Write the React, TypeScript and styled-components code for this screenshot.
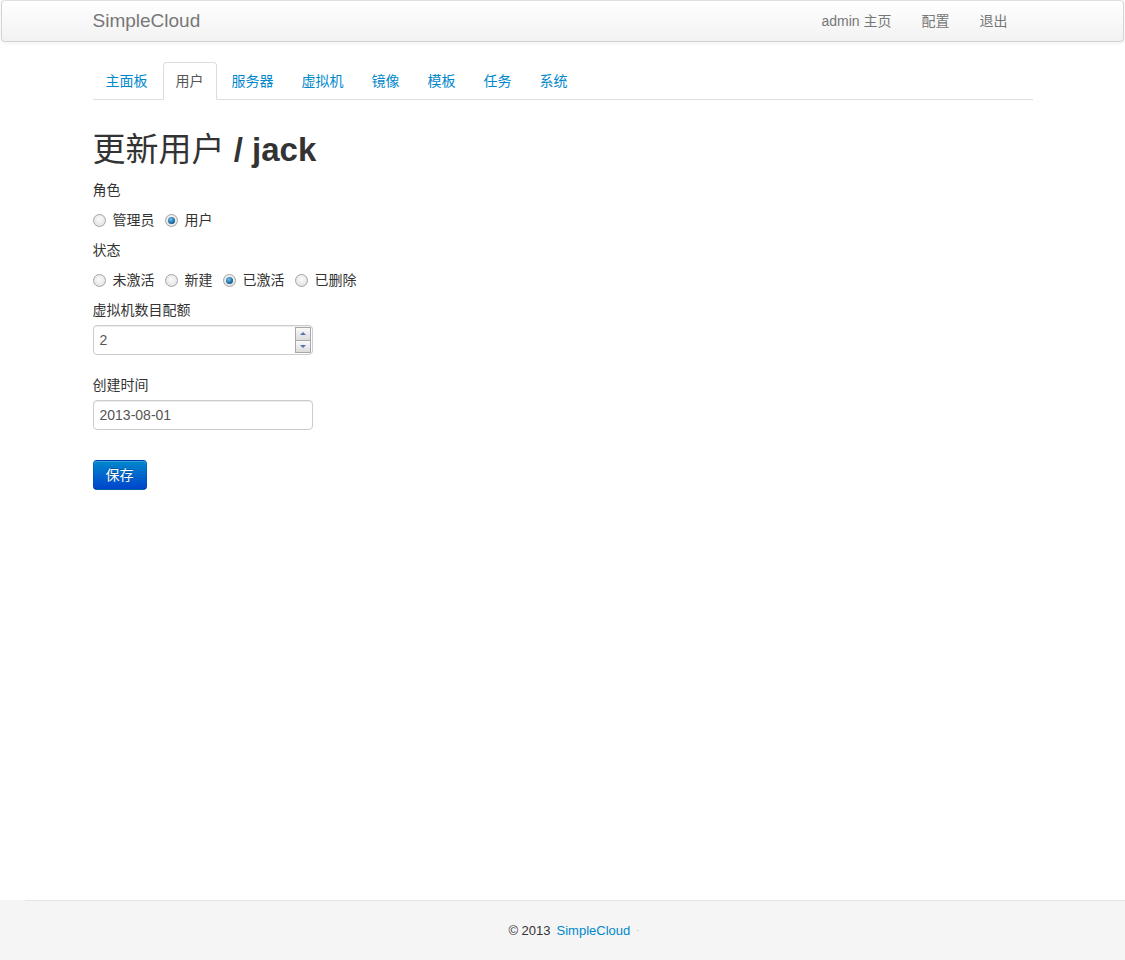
import React from "react";
import styled, { createGlobalStyle } from "styled-components";

const Global = createGlobalStyle`
  html, body { margin: 0; padding: 0; }
  body {
    font-family: "Liberation Sans", Arial, "Noto Sans CJK SC", sans-serif;
    font-size: 14px;
    line-height: 20px;
    color: #333;
    background: #fff;
  }
  * { box-sizing: border-box; }
`;

const Page = styled.div`
  min-height: 100vh;
  display: flex;
  flex-direction: column;
`;

const Navbar = styled.div`
  margin: 0 1px;
  height: 42px;
  border: 1px solid #d4d4d4;
  border-top-color: #e0e0e0;
  border-radius: 4px;
  background: linear-gradient(to bottom, #ffffff, #f2f2f2);
  box-shadow: 0 1px 4px rgba(0, 0, 0, 0.065);
`;

const Container = styled.div`
  width: 940px;
  margin: 0 auto;
`;

const NavInner = styled(Container)`
  display: flex;
  align-items: center;
  justify-content: space-between;
  height: 40px;
`;

const Brand = styled.a`
  font-size: 19px;
  color: #777;
  text-decoration: none;
  line-height: 20px;
`;

const NavLinks = styled.div`
  display: flex;
  margin-right: 10px;
`;

const NavLink = styled.a`
  padding: 10px 15px;
  color: #777;
  font-size: 14px;
  text-decoration: none;
`;

const Main = styled(Container)`
  flex: 1;
  padding-top: 20px;
`;

const Tabs = styled.ul`
  list-style: none;
  margin: 0 0 30px;
  padding: 0;
  display: flex;
  border-bottom: 1px solid #ddd;
`;

const Tab = styled.li<{ $active?: boolean }>`
  margin-right: 2px;
  margin-bottom: -1px;
  a {
    display: block;
    padding: 8px 12px;
    line-height: 20px;
    border: 1px solid ${(p) => (p.$active ? "#ddd" : "transparent")};
    border-bottom-color: ${(p) => (p.$active ? "#fff" : "transparent")};
    border-radius: 4px 4px 0 0;
    background: ${(p) => (p.$active ? "#fff" : "transparent")};
    color: ${(p) => (p.$active ? "#555" : "#0088cc")};
    text-decoration: none;
  }
`;

const Title = styled.h2`
  margin: 0 0 10px;
  font-size: 33px;
  line-height: 40px;
  font-weight: bold;
  color: #333;
  span { font-weight: normal; }
`;

const Label = styled.div<{ $gap?: number }>`
  line-height: 20px;
  margin-bottom: ${(p) => p.$gap ?? 10}px;
`;

const RadioRow = styled.div`
  display: flex;
  align-items: center;
  gap: 10px;
  height: 20px;
  margin-bottom: 10px;
`;

const RadioItem = styled.label`
  display: flex;
  align-items: center;
  gap: 7px;
`;

const Radio = styled.span<{ $checked?: boolean }>`
  width: 13px;
  height: 13px;
  border-radius: 50%;
  border: 1px solid #a5a5a5;
  background: radial-gradient(circle at 50% 40%, #fbfbfb 0%, #dcdcdc 100%);
  display: flex;
  align-items: center;
  justify-content: center;
  &::after {
    content: "";
    display: ${(p) => (p.$checked ? "block" : "none")};
    width: 7px;
    height: 7px;
    border-radius: 50%;
    background: radial-gradient(circle at 40% 35%, #6fc3ee 0%, #1a6aa0 60%, #0b3f6b 100%);
  }
`;

const InputBox = styled.div<{ $mb?: number }>`
  width: 220px;
  height: 30px;
  border: 1px solid #ccc;
  border-radius: 4px;
  box-shadow: inset 0 1px 1px rgba(0, 0, 0, 0.075);
  display: flex;
  align-items: center;
  padding: 0 1px 0 6px;
  color: #555;
  font-size: 14px;
  margin-bottom: ${(p) => p.$mb ?? 20}px;
`;

const InputText = styled.span`
  flex: 1;
`;

const Spinner = styled.div`
  width: 16px;
  height: 26px;
  display: flex;
  flex-direction: column;
  gap: 1px;
  border: 1px solid #a8a8a8;
  background: #a8a8a8;
`;

const SpinBtn = styled.div<{ $down?: boolean }>`
  flex: 1;
  background: linear-gradient(to bottom, #fafafa, #dcdcdc);
  display: flex;
  align-items: center;
  justify-content: center;
  &::after {
    content: "";
    width: 0;
    height: 0;
    border-left: 3px solid transparent;
    border-right: 3px solid transparent;
    ${(p) =>
      p.$down
        ? "border-top: 3px solid #5a6fb0;"
        : "border-bottom: 3px solid #5a6fb0;"}
  }
`;

const SaveButton = styled.button`
  margin-top: 10px;
  width: 54px;
  height: 30px;
  padding: 4px 12px;
  font-family: inherit;
  font-size: 14px;
  line-height: 20px;
  color: #fff;
  border: 1px solid rgba(0, 0, 0, 0.1);
  border-bottom-color: rgba(0, 0, 0, 0.25);
  border-radius: 4px;
  background: linear-gradient(to bottom, #0088cc, #0044cc);
  text-shadow: 0 -1px 0 rgba(0, 0, 0, 0.25);
  box-shadow: inset 0 1px 0 rgba(255, 255, 255, 0.2);
`;

const Footer = styled.footer`
  height: 60px;
  background: #f5f5f5;
  display: flex;
  flex-direction: column;
`;

const FooterRule = styled.div`
  height: 1px;
  margin-left: 25px;
  background: #e5e5e5;
`;

const FooterText = styled.div`
  flex: 1;
  display: flex;
  align-items: center;
  justify-content: center;
  font-size: 13px;
  color: #333;
  gap: 6px;
  padding-left: 23px;
`;

const FooterLink = styled.a`
  color: #0088cc;
  text-decoration: none;
`;

const Dot = styled.span`
  color: #bbb;
  font-size: 10px;
`;

const tabs = ["主面板", "用户", "服务器", "虚拟机", "镜像", "模板", "任务", "系统"];

export default function App() {
  return (
    <Page>
      <Global />
      <Navbar>
        <NavInner>
          <Brand href="#">SimpleCloud</Brand>
          <NavLinks>
            <NavLink href="#">admin 主页</NavLink>
            <NavLink href="#">配置</NavLink>
            <NavLink href="#">退出</NavLink>
          </NavLinks>
        </NavInner>
      </Navbar>
      <Main>
        <Tabs>
          {tabs.map((t) => (
            <Tab key={t} $active={t === "用户"}>
              <a href="#">{t}</a>
            </Tab>
          ))}
        </Tabs>
        <Title>
          <span>更新用户</span> / jack
        </Title>
        <Label>角色</Label>
        <RadioRow>
          <RadioItem>
            <Radio />
            管理员
          </RadioItem>
          <RadioItem>
            <Radio $checked />
            用户
          </RadioItem>
        </RadioRow>
        <Label>状态</Label>
        <RadioRow>
          <RadioItem>
            <Radio />
            未激活
          </RadioItem>
          <RadioItem>
            <Radio />
            新建
          </RadioItem>
          <RadioItem>
            <Radio $checked />
            已激活
          </RadioItem>
          <RadioItem>
            <Radio />
            已删除
          </RadioItem>
        </RadioRow>
        <Label $gap={5}>虚拟机数目配额</Label>
        <InputBox>
          <InputText>2</InputText>
          <Spinner>
            <SpinBtn />
            <SpinBtn $down />
          </Spinner>
        </InputBox>
        <Label $gap={5}>创建时间</Label>
        <InputBox $mb={20}>
          <InputText>2013-08-01</InputText>
        </InputBox>
        <SaveButton>保存</SaveButton>
      </Main>
      <Footer>
        <FooterRule />
        <FooterText>
          <span>© 2013</span>
          <FooterLink href="#">SimpleCloud</FooterLink>
          <Dot>·</Dot>
        </FooterText>
      </Footer>
    </Page>
  );
}
